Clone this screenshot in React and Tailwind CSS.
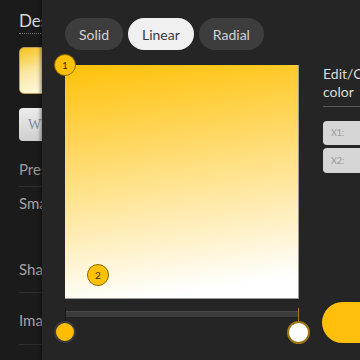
import React from 'react';

const tabs = ['Solid', 'Linear', 'Radial'];

const Row = ({ label, className = '' }) => (
  <div className={`flex items-center text-[15px] text-[#9a9a9a] ${className}`}>{label}</div>
);

export default function App() {
  return (
    <div className="relative w-[360px] h-[360px] overflow-hidden bg-[#1b1b1b] font-['Lato','Open_Sans',sans-serif]">
      {/* page behind the drawer */}
      <div className="flex flex-col pl-[19px] pt-[11px] w-[140px]">
        <div className="text-[17px] leading-[20px] text-[#d6d6d6] pb-[2px] border-b border-dotted border-[#777] w-[100px]">
          Design
        </div>
        <div className="mt-[13px] w-[50px] h-[47px] rounded-[5px] border border-[#b9a15a] bg-[linear-gradient(160deg,#f5c21a_0%,#fbe9a8_45%,#fffdf5_100%)]" />
        <div className="mt-[14px] w-[90px] h-[33px] rounded-[4px] bg-[linear-gradient(180deg,#ececec,#cfcfcf)] flex items-center pl-[9px] text-[14px] text-[#7d8ea6] font-['Liberation_Serif',serif]">
          White
        </div>
        <Row label="Presets" className="mt-[17px] h-[22px] text-[#7e7e7e]" />
        <div className="mt-[6px] border-t border-[#2e2e2e] w-[100px]" />
        <Row label="Small" className="mt-[5px] h-[22px] text-[#a3a3a3]" />
        <Row label="Shadow" className="mt-[44px] h-[22px] text-[#a3a3a3]" />
        <div className="mt-[12px] border-t border-[#2e2e2e] w-[100px]" />
        <Row label="Image" className="mt-[16px] h-[22px] text-[#a3a3a3]" />
        <div className="mt-[13px] border-t border-[#2e2e2e] w-[100px]" />
      </div>

      {/* color drawer */}
      <div className="absolute top-0 left-[42px] w-[360px] h-[360px] bg-[#252525] shadow-[-2px_0_3px_rgba(0,0,0,0.35)] pl-[23px] pt-[18px]">
        <div className="flex gap-[5px]">
          {tabs.map((t) => (
            <div
              key={t}
              className={`h-[32px] px-[14px] rounded-full flex items-center text-[14px] ${
                t === 'Linear' ? 'bg-[#f0f0f0] text-[#3a3a3a]' : 'bg-[#3d3d3d] text-[#d2d2d2]'
              }`}
            >
              {t}
            </div>
          ))}
        </div>

        <div className="flex mt-[15px]">
          <div className="flex flex-col w-[234px]">
            <div className="relative w-[234px] h-[234px] border-r border-b border-[#9c9c9c] bg-[linear-gradient(172deg,#ffc107_0%,#ffffff_92%)]">
              <div className="absolute -left-[11px] -top-[11px] w-[22px] h-[22px] rounded-full bg-[#ffc107] border border-[#8a6a00] flex items-center justify-center text-[10px] text-[#3a2c00]">
                1
              </div>
              <div className="absolute left-[22px] top-[199px] w-[22px] h-[22px] rounded-full bg-[#ffc107] border border-[#8a6a00] flex items-center justify-center text-[10px] text-[#3a2c00]">
                2
              </div>
            </div>
            <div className="relative h-[50px]">
              <div className="mt-[12px] h-[6px] bg-[#3c3c3c] border-t border-[#4a4a4a]" />
              <div className="absolute left-0 top-[9px] w-px h-[13px] bg-[#1a1a1a]" />
              <div className="absolute -left-[11px] top-[22px] w-[22px] h-[22px] rounded-full bg-[#ffbd00] border-2 border-[#3a3a3a]" />
              <div className="absolute left-[233px] top-[9px] w-px h-[13px] bg-[#a47c0c]" />
              <div className="absolute left-[222px] top-[22px] w-[23px] h-[23px] rounded-full bg-white border-2 border-[#9c7510]" />
            </div>
          </div>

          <div className="ml-[24px] flex flex-col w-[120px]">
            <div className="text-[14px] leading-[18px] text-[#dcdcdc]">
              Edit/Create
              <br />
              color
            </div>
            <div className="mt-[5px] border-t border-[#5a5a5a]" />
            <div className="mt-[14px] h-[24px] rounded-[4px] bg-[#d6d6d6] flex items-center pl-[8px] text-[9px] text-[#9a9a9a]">
              X1:
            </div>
            <div className="mt-[3px] h-[25px] rounded-[4px] bg-[#d6d6d6] flex items-center pl-[8px] text-[9px] text-[#9a9a9a]">
              X2:
            </div>
            <div className="mt-[129px] -ml-[1px] h-[41px] rounded-full bg-[#ffbf0a]" />
          </div>
        </div>
      </div>
    </div>
  );
}
